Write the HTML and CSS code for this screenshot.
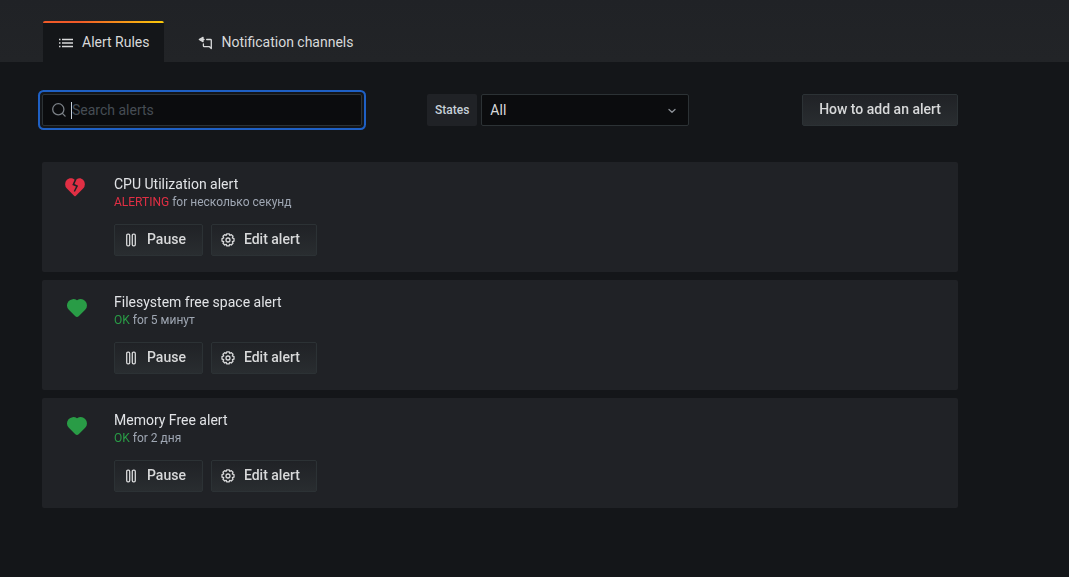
FILE: index.html
```html
<!DOCTYPE html>
<html lang="en">
<head>
<meta charset="utf-8">
<title>Alert Rules</title>
<link rel="stylesheet" href="styles.css">
</head>
<body>
<svg class="sprite" aria-hidden="true">
  <symbol id="pause" viewBox="0 0 16 16"><g fill="none" stroke="currentColor" stroke-width="1.3"><rect x="3.700" y="2.200" width="3" height="11.600" rx="1.200"/><rect x="9.300" y="2.200" width="3" height="11.600" rx="1.200"/></g></symbol>
  <symbol id="cog" viewBox="0 0 16 16"><g fill="none" stroke="currentColor" stroke-width="1.3" stroke-linejoin="round"><circle cx="8" cy="8" r="2"/><path d="M6.8 1.8h2.4l.5 1.5 1.6-.7 1.7 1.7-.7 1.6 1.7.7v2.5l-1.6.6.6 1.6-1.7 1.7-1.6-.7-.6 1.6H6.8l-.6-1.6-1.5.7L3 11.300l.7-1.6L2 9.100V6.700L3.700 6 3 4.300l1.700-1.700 1.500.7z"/></g></symbol>
  <symbol id="heart" viewBox="0 0 24 24"><path fill="currentColor" d="M20.16 5A6.290 6.290 0 0 0 12 4.360a6.270 6.270 0 0 0-8.160 9.480l6.210 6.220a2.780 2.780 0 0 0 3.900 0l6.210-6.220A6.270 6.270 0 0 0 20.160 5z"/></symbol>
  <symbol id="heart-break" viewBox="0 0 24 24"><path fill="currentColor" d="M13.600 4.200C15.800 2.600 18.400 3.100 20.100 4.800a6.200 6.200 0 0 1 0 8.700l-7.400 7.400a1 1 0 0 1-1.400 0l-7.400-7.400a6.200 6.200 0 0 1 0-8.700C5.800 2.900 9.200 2.600 11.600 4.800L9.300 9.900l3.700 1.500-2.300 4.800 1.300.6 3.100-6.100-3.600-1.600 2.100-4.900z"/></symbol>
</svg>

<header class="page-header">
  <nav class="tabs">
    <a class="tab tab-active" href="#rules" aria-current="page">
      <svg class="icon" viewBox="0 0 16 16" aria-hidden="true"><path fill="none" stroke="currentColor" stroke-width="1.300" d="M1 5.500h1.500M4 5.500h11M1 9h1.500M4 9h11M1 12.500h1.500M4 12.500h11"/></svg>
      Alert Rules
    </a>
    <a class="tab" href="#channels">
      <svg class="icon" viewBox="0 0 16 16" aria-hidden="true"><g fill="none" stroke="currentColor" stroke-width="1.300" stroke-linecap="round" stroke-linejoin="round"><path d="M3 5.500h3M8.700 5.500h3.800q.8 0 .8 .8V14.500L11.500 12.700H6.200q-.8 0-.8-.8V10"/><path fill="currentColor" d="M1.300 5.500 5 3.400V4.800M1.300 5.500 5 7.600V6.200"/></g></svg>
      Notification channels
    </a>
  </nav>
</header>

<main class="content">
  <div class="toolbar">
    <label class="search">
      <svg class="icon" viewBox="0 0 16 16" aria-hidden="true"><g fill="none" stroke="currentColor" stroke-width="1.300" stroke-linecap="round"><circle cx="7.300" cy="7.300" r="5.600"/><path d="m11.400 11.400 2.700 2.700"/></g></svg>
      <input class="search-input" type="text" placeholder="Search alerts" aria-label="Search alerts" autofocus>
    </label>
    <div class="filter">
      <label class="filter-label" for="states">States</label>
      <div class="select">
        <select class="select-input" id="states"><option>All</option><option>OK</option><option>Alerting</option></select>
        <svg class="select-arrow" viewBox="0 0 16 16" aria-hidden="true"><path fill="none" stroke="currentColor" stroke-width="1.300" stroke-linecap="round" stroke-linejoin="round" d="m5 7.500 3 2.700 3-2.700"/></svg>
      </div>
    </div>
    <button class="button button-help" type="button">How to add an alert</button>
  </div>

  <ol class="alerts">
    <li class="alert">
      <svg class="state state-alerting" aria-hidden="true"><use href="#heart-break"/></svg>
      <div class="alert-body">
        <a class="alert-name" href="#cpu">CPU Utilization alert</a>
        <div class="alert-info"><span class="alerting">ALERTING</span> for несколько секунд</div>
        <div class="actions">
          <button class="button" type="button"><svg class="icon" aria-hidden="true"><use href="#pause"/></svg>Pause</button>
          <button class="button" type="button"><svg class="icon" aria-hidden="true"><use href="#cog"/></svg>Edit alert</button>
        </div>
      </div>
    </li>
    <li class="alert">
      <svg class="state state-ok" aria-hidden="true"><use href="#heart"/></svg>
      <div class="alert-body">
        <a class="alert-name" href="#filesystem">Filesystem free space alert</a>
        <div class="alert-info"><span class="ok">OK</span> for 5 минут</div>
        <div class="actions">
          <button class="button" type="button"><svg class="icon" aria-hidden="true"><use href="#pause"/></svg>Pause</button>
          <button class="button" type="button"><svg class="icon" aria-hidden="true"><use href="#cog"/></svg>Edit alert</button>
        </div>
      </div>
    </li>
    <li class="alert">
      <svg class="state state-ok" aria-hidden="true"><use href="#heart"/></svg>
      <div class="alert-body">
        <a class="alert-name" href="#memory">Memory Free alert</a>
        <div class="alert-info"><span class="ok">OK</span> for 2 дня</div>
        <div class="actions">
          <button class="button" type="button"><svg class="icon" aria-hidden="true"><use href="#pause"/></svg>Pause</button>
          <button class="button" type="button"><svg class="icon" aria-hidden="true"><use href="#cog"/></svg>Edit alert</button>
        </div>
      </div>
    </li>
  </ol>
</main>
</body>
</html>
```
FILE: styles.css
```css
* { box-sizing: border-box; }

body {
  margin: 0;
  background: #141619;
  color: #c7d0d9;
  font: 14px/20px Roboto, "Liberation Sans", sans-serif;
}

a { color: inherit; text-decoration: none; }

.sprite { display: none; }
.icon { width: 16px; height: 16px; flex: none; }

.page-header {
  padding: 21px 43px 0;
  background: linear-gradient(#202226, #222427);
}

.tabs { display: flex; gap: 19px; }

.tab {
  display: flex;
  align-items: center;
  gap: 8px;
  height: 41px;
  padding: 0 14px 0 15px;
  color: #d8d9da;
  border-radius: 2px 2px 0 0;
}

.tab-active {
  background: linear-gradient(90deg, #f05a28 30%, #fbca0a) top / 100% 2px no-repeat #141619;
}

.content { padding: 32px 111px 32px 42px; }

.toolbar { display: flex; align-items: center; margin-bottom: 36px; }

.search {
  display: flex;
  align-items: center;
  gap: 4px;
  flex: 0 1 320px;
  height: 32px;
  padding: 0 8px;
  color: #7b8087;
  background: #0b0c0e;
  border: 1px solid #2c3235;
  border-radius: 2px;
}

.search:focus-within { box-shadow: 0 0 0 2px #141619, 0 0 0 4px #1f60c4; }

.search-input {
  flex: 1;
  min-width: 0;
  height: 20px;
  padding: 0 0 0 1px;
  color: #c7d0d9;
  background: none;
  border: 0;
  outline: 0;
  font: inherit;
}

/* Steady caret while the field is focused and empty */
.search-input:focus:placeholder-shown {
  caret-color: transparent;
  background: linear-gradient(#c7d0d9, #c7d0d9) left center / 1px 17px no-repeat;
}

.search-input::placeholder { color: #464c54; opacity: 1; }

.filter { display: flex; gap: 4px; margin-left: 65px; }

.filter-label {
  padding: 0 8px;
  background: #202226;
  border-radius: 2px;
  font-size: 12px;
  font-weight: 500;
  line-height: 32px;
}

.select { display: grid; width: 208px; }
.select-input, .select-arrow { grid-area: 1 / 1; }

.select-input {
  appearance: none;
  width: 100%;
  height: 32px;
  padding: 0 32px 0 8px;
  color: #d8d9da;
  background: #0b0c0e;
  border: 1px solid #2c3235;
  border-radius: 2px;
  font: inherit;
}

.select-arrow {
  width: 16px;
  height: 16px;
  margin-right: 9px;
  place-self: center end;
  color: #8e9399;
  pointer-events: none;
}

.button {
  display: flex;
  align-items: center;
  gap: 8px;
  height: 32px;
  padding: 0 16px 2px 8px;
  color: #d8d9da;
  background: linear-gradient(#202226, #292d30);
  border: 1px solid #2c3235;
  border-radius: 2px;
  font: 500 14px/20px Roboto, "Liberation Sans", sans-serif;
}

.button .icon { margin-top: 2px; }
.button-help { margin-left: auto; padding-left: 16px; }

.alerts {
  display: grid;
  gap: 8px;
  margin: 0;
  padding: 0;
  list-style: none;
}

.alert {
  display: grid;
  grid-template-columns: 72px 1fr;
  padding: 12px 16px 16px 0;
  background: #202226;
  border-radius: 2px;
}

.state { width: 24px; height: 24px; }
.state-alerting { margin: 1px 0 0 21px; color: #e02f44; }
.state-ok { margin: 4px 0 0 23px; color: #299c46; }

.alert-name { display: block; color: #e1e3e6; }
.alert-info { color: #9fa7b3; font-size: 12px; line-height: 16px; }
.alerting { color: #e02f44; }
.ok { color: #299c46; }

.actions { display: flex; gap: 8px; margin-top: 14px; }
```
